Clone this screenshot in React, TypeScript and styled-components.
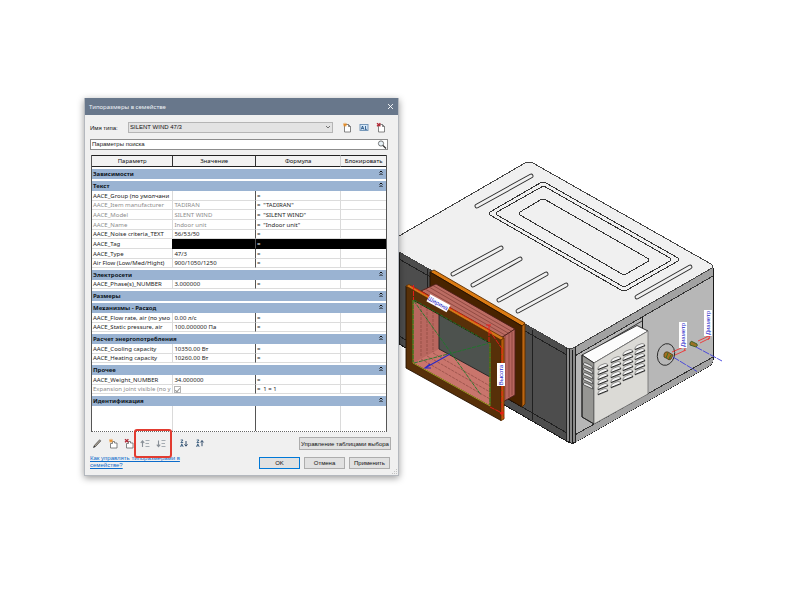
import React from "react";
import styled, { createGlobalStyle } from "styled-components";

const GlobalStyle = createGlobalStyle`
  * { box-sizing: border-box; }
  body { margin: 0; background: #fff; }
`;

const uiFont = `"Liberation Sans", sans-serif`;
const tableFont = `"Noto Sans", "Open Sans", sans-serif`;

const Page = styled.main`
  display: grid;
  grid-template-columns: minmax(300px, 315fr) minmax(0, 401fr);
  align-items: start;
  padding: 98px 0 24px 84px;
`;

const Dialog = styled.section`
  position: relative;
  z-index: 1;
  background: #f0f0f0;
  border: 1px solid #b4b8be;
  border-top: 0;
  box-shadow: 0 2px 7px rgba(0, 0, 0, 0.4);
  font: 6px/8px ${uiFont};
  color: #111;
`;

const TitleBar = styled.header`
  display: flex;
  align-items: center;
  justify-content: space-between;
  height: 17px;
  padding: 0 3px 0 4px;
  background: #68778b;
  color: #eef1f5;
`;

const Title = styled.h1`
  margin: 0;
  font: 6px/10px ${tableFont};
`;

const IconButton = styled.button`
  display: flex;
  align-items: center;
  justify-content: center;
  width: 10px;
  height: 11px;
  padding: 0;
  border: 0;
  background: none;
  color: inherit;
`;

const Body = styled.div`
  padding: 7px 7px 6px 5px;
`;

const TypeRow = styled.div`
  display: flex;
  align-items: center;
  height: 11px;
  padding-right: 5px;
`;

const FieldLabel = styled.label`
  width: 38px;
`;

const SelectBox = styled.div`
  display: grid;
  flex: 1;
  align-items: center;
  margin-right: 9px;
  & > * { grid-area: 1 / 1; }
  & > svg { justify-self: end; margin-right: 2px; pointer-events: none; }
`;

const TypeSelect = styled.select`
  appearance: none;
  width: 100%;
  height: 11px;
  padding: 0 12px 0 1px;
  border: 1px solid #b5b5b5;
  border-radius: 0;
  background: #e3e3e3;
  color: #111;
  font: 6px/9px ${uiFont};
`;

const TypeActions = styled.div`
  display: flex;
  gap: 7px;
`;

const SearchBox = styled.div`
  display: flex;
  align-items: center;
  height: 11px;
  margin: 6px 3px 0 0;
  border: 1px solid #8c8c8c;
  background: #fff;
`;

const SearchInput = styled.input`
  flex: 1;
  min-width: 0;
  height: 9px;
  padding: 0 1px;
  border: 0;
  background: transparent;
  font: 6px/9px ${uiFont};
  &::placeholder { color: #222; opacity: 1; }
`;

const ParameterTable = styled.table`
  width: calc(100% - 5px);
  margin: 5px 4px 0 1px;
  table-layout: fixed;
  border-spacing: 0;
  border-right: 1px solid #555;
  border-bottom: 1px dotted #666;
  border-left: 1px solid #555;
  background: #fff;
  font: 6px/8px ${tableFont};
`;

const HeadCell = styled.th`
  height: 12px;
  padding: 0;
  border-top: 1px solid #222;
  border-bottom: 1px solid #222;
  border-left: 1px solid #333;
  background: #f2f2f2;
  font-weight: 400;
  white-space: nowrap;
  &:first-child { border-left: 0; }
  &:last-child { border-left-color: #d0d0d0; }
`;

const Group = styled.tbody`
  tr { height: 10px; }
  tr:nth-child(3n), tr:last-child:not(:first-child) { height: 9px; }
`;

const GroupCell = styled.th`
  height: 12px;
  padding: 0;
  border-top: 2px solid #fff;
  text-align: left;
`;

const GroupToggle = styled.button`
  display: flex;
  align-items: flex-start;
  justify-content: space-between;
  width: 100%;
  height: 10px;
  padding: 0 2px 0 1px;
  border: 0;
  background: #9ab3d2;
  color: #0c1420;
  font: 700 6px/10px ${tableFont};
`;

const Cell = styled.td<{ $muted?: boolean; $filled?: boolean; $formula?: boolean }>`
  overflow: hidden;
  height: inherit;
  padding: 0 0 0 1px;
  border-bottom: 1px solid ${(p) => (p.$filled ? "#000" : "#dcdcdc")};
  border-left: 1px solid ${(p) => (p.$formula ? "#555" : p.$filled ? "#000" : "#dadada")};
  background: ${(p) => (p.$filled ? "#000" : "#fff")};
  color: ${(p) => (p.$filled ? "#fff" : p.$muted ? "#8c8c8c" : "#1c1c1c")};
  white-space: nowrap;
  &:first-child { border-left: 0; }
`;

const BlankCell = styled(Cell)`
  height: 25px;
  border-bottom: 0;
`;

const Formula = styled.span`
  margin-left: 3px;
`;

const CheckBox = styled.input`
  appearance: none;
  display: block;
  width: 7px;
  height: 7px;
  margin: 0;
  border: 1px solid #b5b5b5;
  background: #fff;
  &:checked::after {
    content: "";
    display: block;
    width: 2px;
    height: 4px;
    margin: 0 auto;
    border-right: 1px solid #999;
    border-bottom: 1px solid #999;
    transform: rotate(40deg);
  }
`;

const ToolRow = styled.div`
  display: flex;
  align-items: center;
  justify-content: space-between;
  height: 13px;
  margin: 5px 0 0 2px;
`;

const Tools = styled.div`
  display: flex;
  align-items: center;
  gap: 6px;
`;

const Highlighted = styled.div`
  position: relative;
  display: flex;
  gap: 6px;
  margin-right: 7px;
  &::after {
    content: "";
    position: absolute;
    inset: -9px -6px;
    border: 2px solid #e23b30;
    border-radius: 3px;
    pointer-events: none;
  }
`;

const Button = styled.button<{ $primary?: boolean; $wide?: boolean }>`
  width: ${(p) => (p.$wide ? "92px" : "41px")};
  height: ${(p) => (p.$wide ? "13px" : "12px")};
  padding: 0;
  border: 1px solid ${(p) => (p.$primary ? "#0078d7" : "#adadad")};
  background: #e1e1e1;
  color: #111;
  font: 6px/8px ${uiFont};
  white-space: nowrap;
`;

const Footer = styled.footer`
  display: flex;
  justify-content: space-between;
  align-items: flex-start;
  margin-top: 5px;
`;

const HelpLink = styled.a`
  width: 98px;
  color: #0b6bcb;
  font: 6px/7px ${uiFont};
`;

const Buttons = styled.div`
  display: flex;
  gap: 4px;
  padding: 2px 1px 0 0;
`;

const ResizeGrip = styled.svg`
  position: absolute;
  right: 0;
  bottom: 0;
`;

const Drawing = styled.svg`
  display: block;
  width: 100%;
  height: auto;
  margin-top: 57px;
`;

type IconProps = { kind: "new" | "rename" | "delete" | "pencil" | "add" | "remove" | "up" | "down" | "asc" | "desc" };

function Icon({ kind }: IconProps) {
  const page = <path d="M2.500 2.500h4l2 2v5.500h-6z M6.500 2.500v2h2" fill="#fff" stroke="#666" strokeWidth=".8" />;
  const tag = <path d="M2.500 5.500v4.500h6.500v-5h-2.500v-1.500h-2v2z" fill="#fff" stroke="#666" strokeWidth=".8" />;
  const spark = <path d="M3 .8v4M1 2.800h4M1.600 1.400l2.800 2.800M4.400 1.400 1.600 4.200" stroke="#e88a20" strokeWidth=".8" />;
  const cross = <path d="M1 1.200l3.400 3M4.400 1.200 1 4.200" stroke="#b32431" strokeWidth="1.300" />;
  return (
    <svg width="10" height="11" viewBox="0 0 10 11" fill="none" aria-hidden="true">
      {kind === "new" && <>{page}{spark}</>}
      {kind === "delete" && <>{page}{cross}</>}
      {kind === "add" && <>{tag}{spark}</>}
      {kind === "remove" && <>{tag}{cross}</>}
      {kind === "rename" && (
        <>
          <rect x="1" y="2.500" width="8" height="6" fill="#d5e7f7" stroke="#6b8fb3" strokeWidth=".9" />
          <path d="M2.200 7.500 3.500 4l1.300 3.500M2.800 6.400h1.600M6.500 4v3.200M5.800 7.400h2" stroke="#17487c" strokeWidth=".8" />
        </>
      )}
      {kind === "pencil" && (
        <>
          <path d="M1.500 9.500 2.500 7.300 7.600 1.800 8.800 2.900 3.600 8.500z" fill="#a89f90" stroke="#555" strokeWidth=".8" />
          <path d="M1.400 9.600 2.300 7.600l1.100 1.100z" fill="#333" />
        </>
      )}
      {(kind === "up" || kind === "down") && (
        <>
          <path d={kind === "up" ? "M2.500 9V3M.8 4.800 2.500 2.800l1.700 2" : "M2.500 2.500v6M.8 6.600l1.700 2 1.700-2"} stroke="#899097" strokeWidth="1.100" />
          <path d="M5.500 2.500h4M5.500 5.500h3.500M5.500 8.500h4" stroke="#929aa2" strokeWidth=".8" />
        </>
      )}
      {(kind === "asc" || kind === "desc") && (
        <>
          <path d="M1.700 2h2.300L1.900 4.500h2.300M1.500 8.800l1.300-3L4.200 8.800M2 7.800h1.700" stroke="#385b7d" strokeWidth=".9" />
          <path d={kind === "asc" ? "M7 3v5M5.500 6.400 7 8.200l1.500-1.800" : "M7 8.200V2.600M5.500 4.400 7 2.600l1.500 1.800"} stroke="#304b69" strokeWidth="1" />
        </>
      )}
    </svg>
  );
}

function Tool({ kind, label }: IconProps & { label: string }) {
  return <IconButton type="button" aria-label={label}><Icon kind={kind} /></IconButton>;
}

type Param = { name: string; value?: string; formula?: string; muted?: boolean; filled?: boolean; checked?: boolean };

const groups: { title: string; rows: Param[]; blank?: boolean }[] = [
  { title: "Зависимости", rows: [] },
  {
    title: "Текст",
    rows: [
      { name: "AACE_Group (по умолчани" },
      { name: "AACE_Item manufacturer", value: "TADIRAN", formula: "\"TADIRAN\"", muted: true },
      { name: "AACE_Model", value: "SILENT WIND", formula: "\"SILENT WIND\"", muted: true },
      { name: "AACE_Name", value: "Indoor unit", formula: "\"Indoor unit\"", muted: true },
      { name: "AACE_Noise criteria_TEXT", value: "56/53/50" },
      { name: "AACE_Tag", filled: true },
      { name: "AACE_Type", value: "47/3" },
      { name: "Air Flow (Low/Med/Hight)", value: "900/1050/1250" },
    ],
  },
  { title: "Электросети", rows: [{ name: "AACE_Phase(s)_NUMBER", value: "3.000000" }] },
  { title: "Размеры", rows: [] },
  {
    title: "Механизмы - Расход",
    rows: [
      { name: "AACE_Flow rate, air (по умо", value: "0.00 л/с" },
      { name: "AACE_Static pressure, air", value: "100.000000 Па" },
    ],
  },
  {
    title: "Расчет энергопотребления",
    rows: [
      { name: "AACE_Cooling capacity", value: "10350.00 Вт" },
      { name: "AACE_Heating capacity", value: "10260.00 Вт" },
    ],
  },
  {
    title: "Прочее",
    rows: [
      { name: "AACE_Weight_NUMBER", value: "34.000000" },
      { name: "Expansion joint visible (по у", formula: "1 = 1", muted: true, checked: true },
    ],
  },
  { title: "Идентификация", rows: [], blank: true },
];

function ParameterGroups() {
  return (
    <>
      {groups.map((group) => (
        <Group key={group.title}>
          <tr>
            <GroupCell colSpan={4}>
              <GroupToggle type="button">
                {group.title}
                <svg width="6" height="8" viewBox="0 0 6 8" fill="none" aria-hidden="true">
                  <path d="M1.500 3.500 3 2l1.500 1.500M1.500 6 3 4.500 4.500 6" stroke="#111" strokeWidth="1" />
                </svg>
              </GroupToggle>
            </GroupCell>
          </tr>
          {group.rows.map((row) => (
            <tr key={row.name}>
              <Cell $muted={row.muted}>{row.name}</Cell>
              <Cell $muted={row.muted} $filled={row.filled}>
                {row.checked ? <CheckBox type="checkbox" defaultChecked disabled aria-label={row.name} /> : row.value}
              </Cell>
              <Cell $formula $filled={row.filled}>={row.formula && <Formula>{row.formula}</Formula>}</Cell>
              <Cell $filled={row.filled} />
            </tr>
          ))}
          {group.blank && (
            <tr><BlankCell /><BlankCell /><BlankCell $formula /><BlankCell /></tr>
          )}
        </Group>
      ))}
    </>
  );
}

const slots = [
  [477, 206, 531, 176], [637, 297, 690, 267], [453, 274, 501, 248],
  [473, 285, 520, 259], [499, 300, 546, 274], [518, 311, 566, 285],
];

const louvers = [[598, 366], [611, 359], [623, 352], [635, 346]];

function UnitDrawing() {
  return (
    <Drawing viewBox="399 155 401 300" role="img" aria-label="SILENT WIND 47/3">
      <g strokeLinejoin="round" strokeWidth="1" shapeRendering="crispEdges">
        <path d="M399 252 567 348 570 443 399 344z" fill="#4d4d4d" stroke="#1c1c1c" />
        <path d="M399 259 567 355M399 336 567 433M427 269v92M532 330v90" fill="none" stroke="#202020" />
        <path d="M573 348 713 268V360L711 365 573 443.500z" fill="#b7b7b7" stroke="#222" />
        <path d="M573 348 713 268V276L573 357z" fill="#a2a2a2" stroke="none" />
        <path d="M573 436 713 357V361L711 365 573 443.500z" fill="#a2a2a2" stroke="none" />
        <path d="M573 357 713 276M573 436 713 357" fill="none" stroke="#333" />
        <path d="M566 347h9v95l-3 1.500-6-3z" fill="#8a8a8a" stroke="#222" />
        <path d="M569.500 349v94M572.500 350v93M713 269v91M642.500 317v13" fill="none" stroke="#1a1a1a" />
        <path d="M399 236 525 163q4-2 8 0L711 264q3 2 1 4L575 347q-4 2.500-8 1L399 252z" fill="#f0f0f0" />
        <path d="M399 236 525 163q4-2 8 0L711 264q3 2 1 4M712 268 575 347q-4 2.500-8 1L399 252" fill="none" stroke="#444" />
      </g>
      <g strokeLinecap="round">
        {slots.map(([a, b, c, d]) => (
          <g key={`${a}-${b}`}>
            <path d={`M${a} ${b} ${c} ${d}`} stroke="#292929" strokeWidth="4.800" />
            <path d={`M${a} ${b} ${c} ${d}`} stroke="#f0f0f0" strokeWidth="3" />
          </g>
        ))}
      </g>
      <g fill="none" stroke="#333" strokeWidth="1" shapeRendering="crispEdges">
        <path d="M490 212 541 182.500q2-1 4 0L678 258q2 1.500 0 3L626 290.500q-2 1-4 0L490 215q-2-1.500 0-3z" />
        <path d="M497 212 541.500 187q2-1 4 0L670 258q2 1.500 0 3L626 286q-2 1-4 0L497 215q-1-1.500 0-3z" />
        <path d="M520 212 541 199.500q2-1 4 0L648 258.500q2 1.500 0 3L626 274q-2 1-4 0L520 215q-2-1.500 0-3z" />
      </g>

      <g stroke="#222" strokeWidth=".9" strokeLinejoin="round">
        <path d="M591 351 642 321" fill="none" />
        <path d="M582 355 637 325.500 648 331 594 363z" fill="#fcfcfc" />
        <path d="M582 355 594 363V424L582 417z" fill="#969693" />
        <path d="M594 363 648 331V394L594 424z" fill="#dbdad6" stroke="#777" />
        <path d="M582 355V417L594 424" fill="none" />
      </g>
      {louvers.flatMap(([x, y]) => [0, 5, 10, 15, 20, 25].map((dy) => (
        <g key={`${x}-${dy}`}>
          <path d={`M${x} ${y + dy + 2}q1-2.500 3-3l4-1.500q3 0 3 2.500l-10 4z`} fill="#f4f4f4" stroke="#555" strokeWidth=".6" />
          <path d={`M${x} ${y + dy + 3.5} ${x + 10} ${y + dy - 0.5}`} stroke="#191919" strokeWidth=".9" />
        </g>
      )))}
      {[0, 5, 10, 15, 20].map((dy) => (
        <path key={dy} d={`M583 ${364 + dy}q1-2 3-1l4 2q3 1 3 4l-9-4z`} fill="#e8e8e8" stroke="#333" strokeWidth=".7" />
      ))}

      <g strokeWidth=".9">
        <path d="M430 272 434 270 525 323 522 326z" fill="#dc7c13" stroke="#5a2c00" />
        <path d="M430 272 522 326V407L430 354z" fill="#482300" stroke="#231000" />
        <path d="M522 326 525 323.500V404L522 407z" fill="#bd6510" stroke="#5a2c00" />
        <path d="M421 291 436 284 515 329 501 338z" fill="#bb6c62" stroke="#4d1e19" />
        <path d="M501 338 515 329V395L501 403z" fill="#b8665f" stroke="#4d1e19" />
        <path d="M425 289 505 335M429 287 508 333M433 285.500 511 331M505 336v64M509 333v64M512 332v63" fill="none" stroke="#803c35" strokeWidth=".7" />
        <path d="M413 300 490 343V406L413 363z" fill="#c9756c" />
        <path d="M413 300 439 315V349L413 363z" fill="#b9675f" />
        <path d="M439 314 490 343V377L439 349z" fill="#4d524e" stroke="#222" />
        <path d="M421 305v52M427 308v46M433 311v41M433 353 490 386M427 356 490 392M421 359 490 399" fill="none" stroke="#8d4840" strokeWidth=".7" strokeDasharray="3 1" />
        <path d="M406 286 501 340V420.500L406 368zM413 300V363L490 406V343z" fill="#573009" fillRule="evenodd" stroke="#271200" />
        <path d="M406 286 409 284.500 504 338 501 340z" fill="#d37819" stroke="#6b3502" />
        <path d="M501 340 504 338V419L501 420.500z" fill="#b75b09" stroke="#6b3502" />
        <path d="M413 300V363L490 406V343" fill="none" stroke="#aaa622" />
        <path d="M414 301 481 395M414 363 490 343M490 343v62M413 300v62M414 300 490 343" fill="none" stroke="#1c7929" strokeDasharray="4 1" />
        <path d="M413.500 285v15M411 286 489 330M489 325v19M486 325h6M489 330 503 350M502 349v65M490 407l14 7M500 412l4 6M504 412l-4 2" fill="none" stroke="#f01919" strokeDasharray="5 1" />
        <path d="M450 354 425 368M430 364l-5 4h6" fill="none" stroke="#2929c4" strokeWidth="1.100" />
      </g>

      <ellipse cx="666" cy="354.500" rx="8.500" ry="11" transform="rotate(15 666 354.500)" fill="none" stroke="#292929" strokeWidth=".9" />
      <g strokeWidth=".9">
        <path d="M664 354q1-3 4-2l5 3-2 4q-2 2-4-.5l-3-1.500z" fill="#a66e22" stroke="#52451c" />
        <path d="M668 353l-2 5M671 355l-2 4" stroke="#237427" />
        <path d="M690 343q1-3 3-1l4 2q1 2-1 3l-6-2z" fill="#9b7125" stroke="#355d25" />
        <path d="M673 357 697 371.500M696 347 722 361" fill="none" stroke="#3e3edd" strokeDasharray="7 1" />
        <path d="M672 352 686 346M675 355 686 350M682 346l4 0-2 5M698 341l11-5M700 343l10-5M706 336l4 0-2 4" fill="none" stroke="#ee3434" />
      </g>
      <g fill="#fff">
        <rect x="679" y="322" width="8" height="26" />
        <rect x="704" y="310" width="8" height="26" />
        <rect x="497" y="363" width="8" height="23" />
        <rect x="427" y="299" width="23" height="8" transform="rotate(29 438 303)" />
      </g>
      <g fill="#2525c8" fontFamily="Liberation Sans, sans-serif" fontSize="6" textAnchor="middle">
        <text transform="translate(685 335) rotate(-90)">Диаметр</text>
        <text transform="translate(710 323) rotate(-90)">Диаметр</text>
        <text transform="translate(503 375) rotate(-90)">Высота</text>
        <text transform="translate(437 305) rotate(29)">Ширина</text>
      </g>
    </Drawing>
  );
}

export default function App() {
  return (
    <>
      <GlobalStyle />
      <Page>
        <Dialog aria-label="Типоразмеры в семействе">
          <TitleBar>
            <Title>Типоразмеры в семействе</Title>
            <IconButton type="button" aria-label="Закрыть">
              <svg width="7" height="7" viewBox="0 0 7 7" aria-hidden="true"><path d="m1 1 5 5M6 1 1 6" stroke="#fff" strokeWidth=".9" /></svg>
            </IconButton>
          </TitleBar>
          <Body>
            <TypeRow>
              <FieldLabel htmlFor="type-name">Имя типа:</FieldLabel>
              <SelectBox>
                <TypeSelect id="type-name"><option>SILENT WIND 47/3</option></TypeSelect>
                <svg width="6" height="5" viewBox="0 0 6 5" fill="none" aria-hidden="true"><path d="m1 1 2 2 2-2" stroke="#555" strokeWidth=".8" /></svg>
              </SelectBox>
              <TypeActions>
                <Tool kind="new" label="Создать тип" />
                <Tool kind="rename" label="Переименовать тип" />
                <Tool kind="delete" label="Удалить тип" />
              </TypeActions>
            </TypeRow>
            <SearchBox>
              <SearchInput type="text" placeholder="Параметры поиска" aria-label="Параметры поиска" />
              <svg width="10" height="9" viewBox="0 0 10 9" fill="none" aria-hidden="true">
                <circle cx="4" cy="3.500" r="2.600" fill="#e8f2f8" stroke="#555" strokeWidth=".8" />
                <path d="m6 5.500 3 3" stroke="#333" strokeWidth="1.300" />
              </svg>
            </SearchBox>
            <ParameterTable>
              <colgroup>
                <col style={{ width: `${(81 / 296) * 100}%` }} />
                <col style={{ width: `${(83 / 296) * 100}%` }} />
                <col style={{ width: `${(86 / 296) * 100}%` }} />
                <col />
              </colgroup>
              <thead>
                <tr>
                  <HeadCell>Параметр</HeadCell>
                  <HeadCell>Значение</HeadCell>
                  <HeadCell>Формула</HeadCell>
                  <HeadCell>Блокировать</HeadCell>
                </tr>
              </thead>
              <ParameterGroups />
            </ParameterTable>
            <ToolRow>
              <Tools>
                <Tool kind="pencil" label="Изменить параметр" />
                <Tool kind="add" label="Создать параметр" />
                <Tool kind="remove" label="Удалить параметр" />
                <Highlighted>
                  <Tool kind="up" label="Вверх" />
                  <Tool kind="down" label="Вниз" />
                </Highlighted>
                <Tool kind="asc" label="По возрастанию" />
                <Tool kind="desc" label="По убыванию" />
              </Tools>
              <Button type="button" $wide>Управление таблицами выбора</Button>
            </ToolRow>
            <Footer>
              <HelpLink href="#help">Как управлять типоразмерами в семействе?</HelpLink>
              <Buttons>
                <Button type="button" $primary>OK</Button>
                <Button type="button">Отмена</Button>
                <Button type="button">Применить</Button>
              </Buttons>
            </Footer>
          </Body>
          <ResizeGrip width="6" height="6" viewBox="0 0 6 6" aria-hidden="true">
            <path d="M4 0h1v1H4zM2 2h1v1H2zM4 2h1v1H4zM0 4h1v1H0zM2 4h1v1H2zM4 4h1v1H4z" fill="#c2c2c2" />
          </ResizeGrip>
        </Dialog>
        <UnitDrawing />
      </Page>
    </>
  );
}
